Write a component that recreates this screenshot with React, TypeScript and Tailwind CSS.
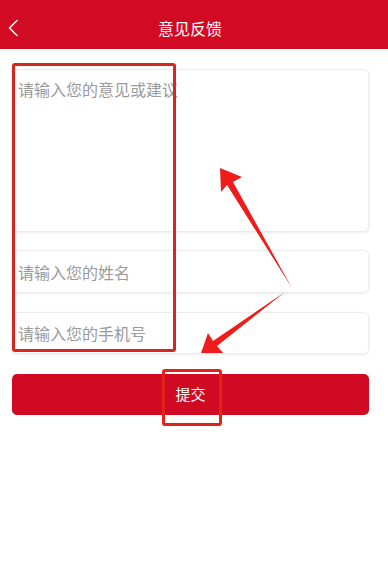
import React from "react";

export default function App() {
  const font = { fontFamily: '"Noto Sans CJK SC", "Noto Sans", sans-serif' };
  return (
    <div className="relative w-[388px] h-[577px] bg-white overflow-hidden" style={font}>
      <div className="h-[49px] bg-[#d10b23] flex items-center relative">
        <svg className="absolute left-[7px] top-[19px]" width="12" height="18" viewBox="0 0 12 18">
          <path d="M10 1.5 L2.5 9 L10 16.5" fill="none" stroke="white" strokeWidth="1.5" strokeLinecap="round" strokeLinejoin="round" />
        </svg>
        <div className="flex-1 text-center text-white text-[16px] pr-[8px] pt-[6px]">意见反馈</div>
      </div>
      <div className="pl-[12px] pr-[19px] pt-[20px] flex flex-col">
        <div className="h-[163px] bg-white rounded-[5px] border border-[#ececec] shadow-[0_1px_3px_rgba(0,0,0,0.08)] px-[5px] pt-[7px]">
          <div className="text-[16px] text-[#9a9a9a] leading-[24px]">请输入您的意见或建议</div>
        </div>
        <div className="mt-[18px] h-[43px] bg-white rounded-[5px] border border-[#ececec] shadow-[0_1px_3px_rgba(0,0,0,0.08)] px-[5px] flex items-center">
          <div className="text-[16px] text-[#9a9a9a]">请输入您的姓名</div>
        </div>
        <div className="mt-[19px] h-[42px] bg-white rounded-[5px] border border-[#ececec] shadow-[0_1px_3px_rgba(0,0,0,0.08)] px-[5px] flex items-center">
          <div className="text-[16px] text-[#9a9a9a]">请输入您的手机号</div>
        </div>
        <div className="mt-[20px] h-[41px] bg-[#cf0a22] rounded-[5px] flex items-center justify-center">
          <div className="text-[15px] text-white">提交</div>
        </div>
      </div>
      {/* annotation boxes */}
      <div className="absolute left-[12px] top-[63px] w-[164px] h-[289px] border-[3px] border-[#d8261f] rounded-[3px]" />
      <div className="absolute left-[162px] top-[369px] w-[60px] h-[57px] border-[3px] border-[#e2231a] rounded-[3px]" />
      {/* arrows */}
      <svg className="absolute left-0 top-0" width="388" height="577" viewBox="0 0 388 577">
        <polygon points="220,168 242,177 233,182 292,288 227,185 221,192" fill="#ef1c1c" />
        <polygon points="201,353 208,333 213,341 285,292 217,346 223,353" fill="#ef1c1c" />
      </svg>
    </div>
  );
}
